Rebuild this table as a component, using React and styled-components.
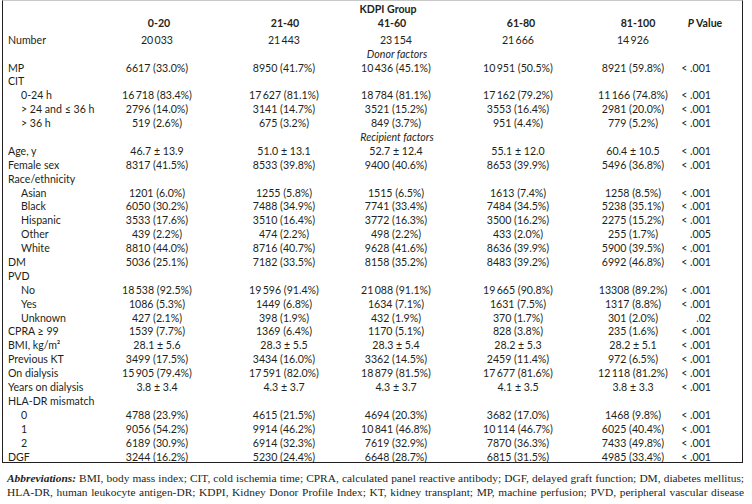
import React from "react";
import styled, { createGlobalStyle } from "styled-components";

const GlobalStyle = createGlobalStyle`
  html, body { margin: 0; padding: 0; background: #ffffff; }
  body { font-family: "Lato", "Liberation Sans", sans-serif; color: #231f20; }
`;

const COLS = "97px 114px 140px 84px 160px 70px 74px";
const T = "\u2009";

const Page = styled.div`
  width: 752px;
  height: 504px;
  padding: 0 0 0 2px;
  box-sizing: border-box;
`;

const TableBox = styled.div`
  width: 741px;
  box-sizing: border-box;
  border: 1px solid #231f20;
  border-top-color: #c8c8c8;
  padding: 2px 0 0 0;
  font-size: 10.6px;
`;

const Row = styled.div`
  display: grid;
  grid-template-columns: ${COLS};
  height: ${(p) => p.$h || 13.9}px;
  line-height: 13.9px;
  margin-top: ${(p) => p.$gap || 0}px;
`;

const Label = styled.div`
  padding-left: ${(p) => (p.$indent ? 18 : 5)}px;
  white-space: nowrap;
`;

const Cell = styled.div`
  display: flex;
  justify-content: ${(p) => (p.$right ? "flex-end" : "center")};
  padding-right: ${(p) => (p.$right ? 31 : 0)}px;
  white-space: nowrap;
`;

const HeadCell = styled.div`
  display: flex;
  justify-content: center;
  white-space: nowrap;
  font-weight: 700;
  padding-left: ${(p) => Math.max(0, (p.$shift || 0) * 2)}px;
  padding-right: ${(p) => Math.max(0, -(p.$shift || 0) * 2)}px;
`;

const GroupTitle = styled.div`
  grid-column: 2 / 7;
  display: flex;
  justify-content: center;
  font-weight: 700;
  padding-left: ${(p) => p.$shift || 0}px;
`;

const Section = styled.div`
  grid-column: 2 / 7;
  display: flex;
  justify-content: center;
  font-style: italic;
  padding-left: ${(p) => p.$shift || 0}px;
`;

const Footer = styled.div`
  margin-top: 8px;
  padding: 0 8px 0 5px;
  font-family: "Liberation Serif", "DejaVu Serif", serif;
  font-size: 11.4px;
  line-height: 14px;
`;

const FootLine = styled.div`
  text-align: justify;
  text-align-last: justify;
`;

const Abbr = styled.span`
  font-weight: 700;
  font-style: italic;
`;

const groups = [
  { name: "0-20", shift: 2 },
  { name: "21-40", shift: 1 },
  { name: "41-60", shift: -4 },
  { name: "61-80", shift: 3 },
  { name: "81-100", shift: 5 },
];

const rows = [
  { type: "data", label: "Number", v: ["20" + T + "033", "21" + T + "443", "23" + T + "154", "21" + T + "666", "14" + T + "926"], p: "", gap: 3 },
  { type: "section", label: "Donor factors" },
  { type: "data", label: "MP", v: ["6617 (33.0%)", "8950 (41.7%)", "10" + T + "436 (45.1%)", "10" + T + "951 (50.5%)", "8921 (59.8%)"], p: "< .001" },
  { type: "data", label: "CIT" },
  { type: "data", indent: true, label: "0-24 h", v: ["16" + T + "718 (83.4%)", "17" + T + "627 (81.1%)", "18" + T + "784 (81.1%)", "17" + T + "162 (79.2%)", "11" + T + "166 (74.8%)"], p: "< .001" },
  { type: "data", indent: true, label: "> 24 and \u2264 36 h", v: ["2796 (14.0%)", "3141 (14.7%)", "3521 (15.2%)", "3553 (16.4%)", "2981 (20.0%)"], p: "< .001" },
  { type: "data", indent: true, label: "> 36 h", v: ["519 (2.6%)", "675 (3.2%)", "849 (3.7%)", "951 (4.4%)", "779 (5.2%)"], p: "< .001" },
  { type: "section", label: "Recipient factors" },
  { type: "data", label: "Age, y", v: ["46.7 \u00b1 13.9", "51.0 \u00b1 13.1", "52.7 \u00b1 12.4", "55.1 \u00b1 12.0", "60.4 \u00b1 10.5"], p: "< .001" },
  { type: "data", label: "Female sex", v: ["8317 (41.5%)", "8533 (39.8%)", "9400 (40.6%)", "8653 (39.9%)", "5496 (36.8%)"], p: "< .001" },
  { type: "data", label: "Race/ethnicity" },
  { type: "data", indent: true, label: "Asian", v: ["1201 (6.0%)", "1255 (5.8%)", "1515 (6.5%)", "1613 (7.4%)", "1258 (8.5%)"], p: "< .001" },
  { type: "data", indent: true, label: "Black", v: ["6050 (30.2%)", "7488 (34.9%)", "7741 (33.4%)", "7484 (34.5%)", "5238 (35.1%)"], p: "< .001" },
  { type: "data", indent: true, label: "Hispanic", v: ["3533 (17.6%)", "3510 (16.4%)", "3772 (16.3%)", "3500 (16.2%)", "2275 (15.2%)"], p: "< .001" },
  { type: "data", indent: true, label: "Other", v: ["439 (2.2%)", "474 (2.2%)", "498 (2.2%)", "433 (2.0%)", "255 (1.7%)"], p: ".005" },
  { type: "data", indent: true, label: "White", v: ["8810 (44.0%)", "8716 (40.7%)", "9628 (41.6%)", "8636 (39.9%)", "5900 (39.5%)"], p: "< .001" },
  { type: "data", label: "DM", v: ["5036 (25.1%)", "7182 (33.5%)", "8158 (35.2%)", "8483 (39.2%)", "6992 (46.8%)"], p: "< .001" },
  { type: "data", label: "PVD" },
  { type: "data", indent: true, label: "No", v: ["18" + T + "538 (92.5%)", "19" + T + "596 (91.4%)", "21" + T + "088 (91.1%)", "19" + T + "665 (90.8%)", "13308 (89.2%)"], p: "< .001" },
  { type: "data", indent: true, label: "Yes", v: ["1086 (5.3%)", "1449 (6.8%)", "1634 (7.1%)", "1631 (7.5%)", "1317 (8.8%)"], p: "< .001" },
  { type: "data", indent: true, label: "Unknown", v: ["427 (2.1%)", "398 (1.9%)", "432 (1.9%)", "370 (1.7%)", "301 (2.0%)"], p: ".02" },
  { type: "data", label: "CPRA \u2265 99", v: ["1539 (7.7%)", "1369 (6.4%)", "1170 (5.1%)", "828 (3.8%)", "235 (1.6%)"], p: "< .001" },
  { type: "data", label: "BMI, kg/m\u00b2", v: ["28.1 \u00b1 5.6", "28.3 \u00b1 5.5", "28.3 \u00b1 5.4", "28.2 \u00b1 5.3", "28.2 \u00b1 5.1"], p: "< .001" },
  { type: "data", label: "Previous KT", v: ["3499 (17.5%)", "3434 (16.0%)", "3362 (14.5%)", "2459 (11.4%)", "972 (6.5%)"], p: "< .001" },
  { type: "data", label: "On dialysis", v: ["15" + T + "905 (79.4%)", "17" + T + "591 (82.0%)", "18" + T + "879 (81.5%)", "17" + T + "677 (81.6%)", "12" + T + "118 (81.2%)"], p: "< .001" },
  { type: "data", label: "Years on dialysis", v: ["3.8 \u00b1 3.4", "4.3 \u00b1 3.7", "4.3 \u00b1 3.7", "4.1 \u00b1 3.5", "3.8 \u00b1 3.3"], p: "< .001" },
  { type: "data", label: "HLA-DR mismatch" },
  { type: "data", indent: true, label: "0", v: ["4788 (23.9%)", "4615 (21.5%)", "4694 (20.3%)", "3682 (17.0%)", "1468 (9.8%)"], p: "< .001" },
  { type: "data", indent: true, label: "1", v: ["9056 (54.2%)", "9914 (46.2%)", "10" + T + "841 (46.8%)", "10" + T + "114 (46.7%)", "6025 (40.4%)"], p: "< .001" },
  { type: "data", indent: true, label: "2", v: ["6189 (30.9%)", "6914 (32.3%)", "7619 (32.9%)", "7870 (36.3%)", "7433 (49.8%)"], p: "< .001" },
  { type: "data", label: "DGF", v: ["3244 (16.2%)", "5230 (24.4%)", "6648 (28.7%)", "6815 (31.5%)", "4985 (33.4%)"], p: "< .001", h: 11.5 },
];

export default function App() {
  return (
    <Page>
      <GlobalStyle />
      <TableBox>
        <Row>
          <Label />
          <GroupTitle $shift={8}>KDPI Group</GroupTitle>
        </Row>
        <Row>
          <Label />
          {groups.map((g) => (
            <HeadCell key={g.name} $shift={g.shift}>
              {g.name}
            </HeadCell>
          ))}
          <HeadCell>
            <i>P</i>&nbsp;Value
          </HeadCell>
        </Row>
        {rows.map((r, i) =>
          r.type === "section" ? (
            <Row key={i}>
              <Label />
              <Section $shift={26}>{r.label}</Section>
            </Row>
          ) : (
            <Row key={i} $gap={r.gap} $h={r.h}>
              <Label $indent={r.indent}>{r.label}</Label>
              {(r.v || ["", "", "", "", ""]).map((v, j) => (
                <Cell key={j}>{v}</Cell>
              ))}
              <Cell $right>{r.p || ""}</Cell>
            </Row>
          )
        )}
      </TableBox>
      <Footer>
        <FootLine>
          <Abbr>Abbreviations:</Abbr> BMI, body mass index; CIT, cold ischemia time; CPRA, calculated panel reactive antibody; DGF, delayed graft function; DM, diabetes mellitus;
        </FootLine>
        <FootLine>
          HLA-DR, human leukocyte antigen-DR; KDPI, Kidney Donor Profile Index; KT, kidney transplant; MP, machine perfusion; PVD, peripheral vascular disease
        </FootLine>
      </Footer>
    </Page>
  );
}
